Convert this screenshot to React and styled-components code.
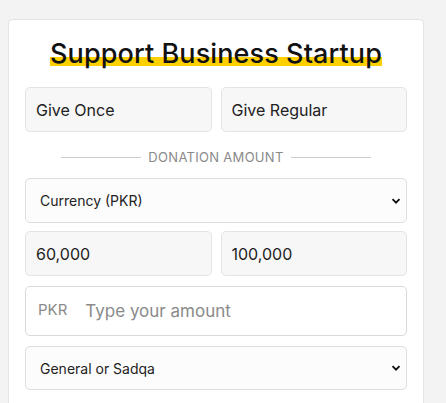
import styled, { createGlobalStyle } from 'styled-components'

const GlobalStyle = createGlobalStyle`
  html, body {
    margin: 0;
    background-color: #F3F3F3;
  }
  body {
    font-family: 'Inter', 'Noto Sans', sans-serif;
    color: #111111;
  }
`

const chevron = `url("data:image/svg+xml,%3Csvg xmlns='http://www.w3.org/2000/svg' width='10' height='10' viewBox='0 0 10 10'%3E%3Cpath d='M1.5 3.2 5 6.7 8.5 3.2' fill='none' stroke='%23111' stroke-width='1.9'/%3E%3C/svg%3E")`

const Page = styled.div`
  height: 403px;
  overflow: hidden;
  padding: 19px 0 0 8px;
  box-sizing: border-box;
`
const Card = styled.div`
  background-color: #FFFFFF;
  border: 1px solid #E3E3E3;
  border-radius: 4px;
  box-sizing: border-box;
  display: flex;
  flex-direction: column;
  padding: 16px 16px 30px 16px;
  width: 416px;
`
const Title = styled.h2`
  align-self: center;
  background: linear-gradient(transparent 58%, #FFD000 58%, #FFD000 82%, transparent 82%);
  font-size: 27px;
  font-weight: 500;
  letter-spacing: 0.1px;
  line-height: 36px;
  margin: 0 0 15px 0;
`
const Row = styled.div`
  display: grid;
  gap: 9px;
  grid-template-columns: 1fr 1fr;
`
const Choice = styled.button`
  background-color: #F7F7F7;
  border: 1px solid #E4E4E4;
  border-radius: 5px;
  color: #222222;
  font-family: inherit;
  font-size: 16px;
  height: 45px;
  padding: 0 0 0 10px;
  text-align: left;
`
const Divider = styled.div`
  align-items: center;
  color: #8A8A8A;
  display: flex;
  font-size: 13px;
  gap: 7px;
  justify-content: center;
  letter-spacing: 0.3px;
  margin: 17px 0 13px 0;
  text-transform: uppercase;

  &::before, &::after {
    background-color: #CFCFCF;
    content: '';
    height: 1px;
    width: 80px;
  }
`
const Select = styled.select`
  appearance: none;
  background: #FCFCFC ${chevron} no-repeat right 5px center;
  border: 1px solid #DEDEDE;
  border-radius: 5px;
  color: #222222;
  font-family: inherit;
  font-size: 14px;
  height: ${p => p.$h}px;
  padding: 0 20px 0 14px;
  width: 100%;
`
const Amounts = styled(Row)`
  margin: 8px 0 10px 0;
`
const AmountBox = styled.label`
  align-items: center;
  background-color: #FFFFFF;
  border: 1px solid #D9D9D9;
  border-radius: 5px;
  display: flex;
  gap: 18px;
  height: 50px;
  margin-bottom: 10px;
  padding: 0 12px;
  box-sizing: border-box;
`
const Prefix = styled.span`
  color: #8A8A8A;
  font-size: 15px;
  margin-top: -3px;
`
const AmountInput = styled.input`
  border: none;
  flex: 1;
  font-family: inherit;
  font-size: 17px;
  outline: none;
  padding: 0;

  &::placeholder {
    color: #8A8A8A;
  }
`

export default function App() {
  return (
    <>
      <GlobalStyle />
      <Page>
        <Card>
          <Title>Support Business Startup</Title>
          <Row>
            <Choice>Give Once</Choice>
            <Choice>Give Regular</Choice>
          </Row>
          <Divider>Donation Amount</Divider>
          <Select $h={45} defaultValue="pkr">
            <option value="pkr">Currency (PKR)</option>
          </Select>
          <Amounts>
            <Choice>60,000</Choice>
            <Choice>100,000</Choice>
          </Amounts>
          <AmountBox>
            <Prefix>PKR</Prefix>
            <AmountInput placeholder="Type your amount" />
          </AmountBox>
          <Select $h={44} defaultValue="general">
            <option value="general">General or Sadqa</option>
          </Select>
        </Card>
      </Page>
    </>
  )
}
